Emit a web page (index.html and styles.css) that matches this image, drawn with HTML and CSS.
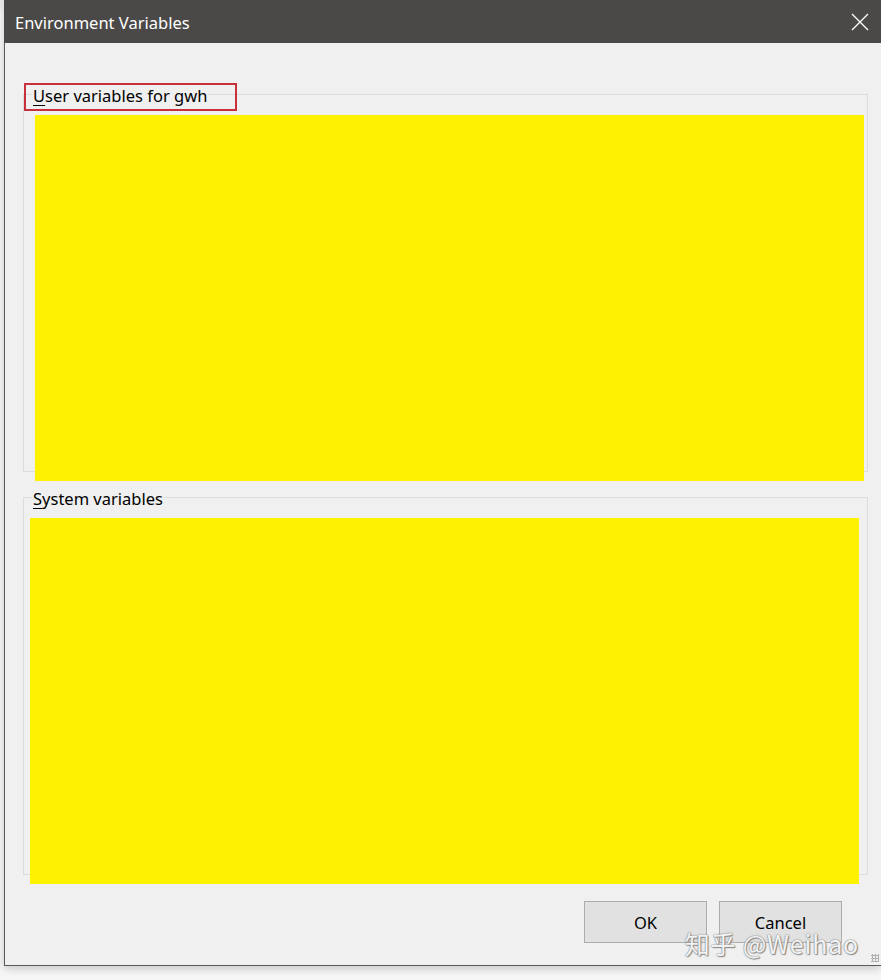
FILE: index.html
```html
<!DOCTYPE html>
<html>
<head>
<meta charset="utf-8">
<link rel="stylesheet" href="styles.css">
</head>
<body>
<div class="screen">
  <div class="window">
    <div class="titlebar">
      <span class="title">Environment Variables</span>
      <svg class="close" width="18" height="18" viewBox="0 0 18 18"><path d="M1 1L17 17M17 1L1 17" stroke="#ffffff" stroke-width="1.3" fill="none"/></svg>
    </div>
    <div class="content">
      <div class="group group-user">
        <span class="legend"><u>U</u>ser variables for gwh</span>
        <span class="highlight"></span>
        <div class="redact redact-user"></div>
      </div>
      <div class="group group-system">
        <span class="legend"><u>S</u>ystem variables</span>
        <div class="redact redact-system"></div>
      </div>
      <div class="buttons">
        <button class="btn">OK</button>
        <button class="btn">Cancel</button>
      </div>
      <span class="watermark">知乎 @Weihao</span>
      <span class="grip"></span>
    </div>
  </div>
</div>
</body>
</html>
```
FILE: styles.css
```css
html, body {
  margin: 0;
  padding: 0;
}
body {
  background: #f4f4f4;
  font-family: "Noto Sans", "Open Sans", "Noto Sans CJK SC", sans-serif;
}
.screen {
  width: 881px;
  height: 980px;
  overflow: hidden;
  background: linear-gradient(#e6e6e6, #f6f6f6 14px);
  background-color: #f4f4f4;
  position: relative;
}
.window {
  margin-left: 4px;
  width: 877px;
  height: 966px;
  box-sizing: border-box;
  border-left: 1px solid #5a5a5a;
  border-bottom: 1px solid #5a5a5a;
  background: #f0f0f0;
  box-shadow: 0 3px 8px rgba(0,0,0,0.18);
  display: flex;
  flex-direction: column;
}
.titlebar {
  height: 43px;
  flex: none;
  background: #4a4947;
  display: flex;
  align-items: center;
  justify-content: space-between;
  padding: 0 12px 0 11px;
  margin-left: -1px;
}
.title {
  color: #ffffff;
  font-size: 16.5px;
  margin-top: 1px;
}
.close {
  display: block;
}
.content {
  position: relative;
  flex: 1;
  padding: 51px 0 0 18px;
  display: flex;
  flex-direction: column;
}
.group {
  position: relative;
  width: 845px;
  height: 378px;
  box-sizing: border-box;
  border: 1px solid #dcdcdc;
}
.group-system {
  margin-top: 25px;
}
.legend {
  position: absolute;
  left: 8px;
  top: -10px;
  padding: 0 1px;
  background: #f0f0f0;
  color: #000;
  font-size: 16.5px;
  line-height: 22px;
}
.legend u {
  text-decoration-thickness: 1px;
  text-underline-offset: 3px;
}
.highlight {
  position: absolute;
  left: 0px;
  top: -12px;
  width: 213px;
  height: 28px;
  box-sizing: border-box;
  border: 2px solid #c9303e;
}
.redact {
  position: absolute;
  background: #fff200;
  width: 829px;
  height: 366px;
  top: 20px;
}
.redact-user {
  left: 11px;
}
.redact-system {
  left: 6px;
}
.buttons {
  display: flex;
  gap: 12px;
  margin-top: 26px;
  margin-left: 561px;
}
.btn {
  width: 123px;
  height: 42px;
  box-sizing: border-box;
  background: #e1e1e1;
  border: 1px solid #adadad;
  font-family: "Noto Sans", "Open Sans", sans-serif;
  font-size: 16.5px;
  color: #000;
  padding: 0;
}
.watermark {
  position: absolute;
  right: 22px;
  bottom: 4px;
  font-family: "Noto Sans CJK SC", "Noto Sans", sans-serif;
  font-size: 25px;
  color: rgba(255,255,255,0.92);
  text-shadow: 0 0 1px #777, 0 0 2px #999, 1px 1px 1px #888;
  letter-spacing: 0.8px;
}
.grip {
  position: absolute;
  right: 2px;
  bottom: 3px;
  width: 8px;
  height: 8px;
  background-image: radial-gradient(circle, #b0b0b0 1px, transparent 1.2px);
  background-size: 3px 3px;
}
```
